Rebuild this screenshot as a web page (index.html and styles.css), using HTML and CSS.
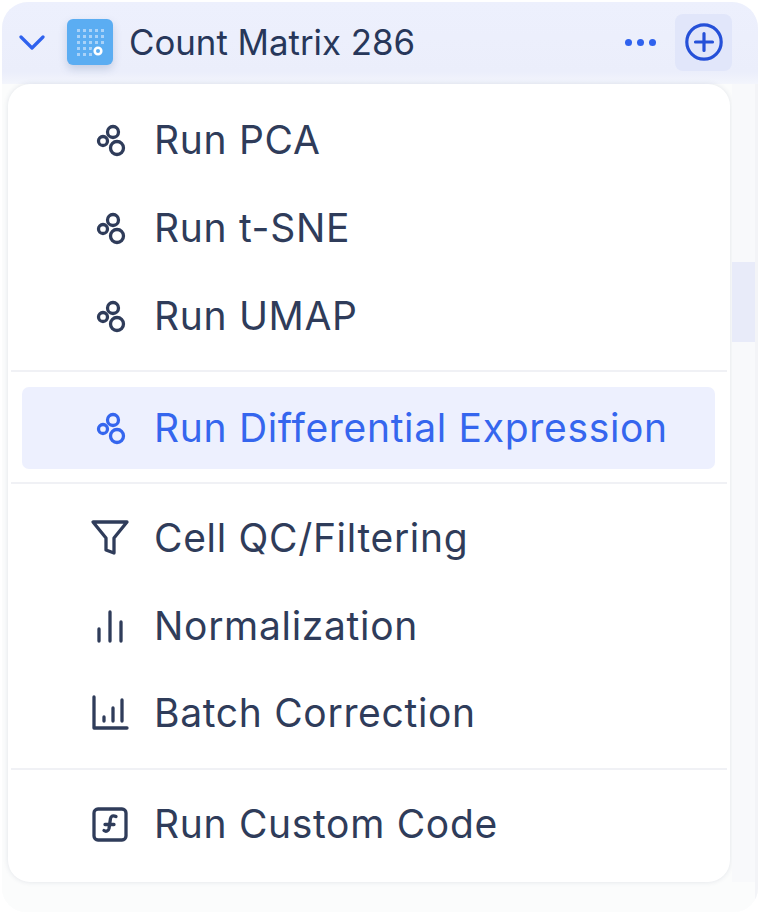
FILE: index.html
```html
<!DOCTYPE html>
<html lang="en">
<head>
<meta charset="utf-8">
<title>Count Matrix 286</title>
<link rel="stylesheet" href="styles.css">
</head>
<body>
<section class="panel">
  <header class="head">
    <svg class="chev" viewBox="0 0 26 16"><path d="M2 3l11 11L24 3"/></svg>
    <span class="logo">
      <svg viewBox="0 0 46 46" width="46" height="46">
        <g fill="#a9d2f8">
          <rect x="10" y="10" width="3" height="3"/><rect x="16" y="10" width="3" height="3"/><rect x="22" y="10" width="3" height="3"/><rect x="28" y="10" width="3" height="3"/><rect x="34" y="10" width="3" height="3"/>
          <rect x="10" y="16" width="3" height="3"/><rect x="16" y="16" width="3" height="3"/><rect x="22" y="16" width="3" height="3"/><rect x="28" y="16" width="3" height="3"/><rect x="34" y="16" width="3" height="3"/>
          <rect x="10" y="22" width="3" height="3"/><rect x="16" y="22" width="3" height="3"/><rect x="22" y="22" width="3" height="3"/><rect x="28" y="22" width="3" height="3"/><rect x="34" y="22" width="3" height="3"/>
          <rect x="10" y="28" width="3" height="3"/><rect x="16" y="28" width="3" height="3"/><rect x="22" y="28" width="3" height="3"/><rect x="28" y="28" width="3" height="3"/>
          <rect x="10" y="34" width="3" height="3"/><rect x="16" y="34" width="3" height="3"/><rect x="22" y="34" width="3" height="3"/>
        </g>
        <circle cx="31" cy="32" r="6.500" fill="#5badf2"/>
        <circle cx="31" cy="32" r="3.300" fill="none" stroke="#fff" stroke-width="2.600"/>
      </svg>
    </span>
    <h1 class="title">Count Matrix 286</h1>
    <span class="dots"><i></i><i></i><i></i></span>
    <button class="add" type="button" aria-label="Add">
      <svg viewBox="0 0 38 38" width="38" height="38"><circle cx="19" cy="19" r="17.2"/><path d="M19 10.500v17M10.500 19h17"/></svg>
    </button>
  </header>
  <div class="body">
    <nav class="menu">
      <ul class="group">
        <li class="item"><svg class="ico" viewBox="0 0 40 40"><use href="#cells"/></svg>Run PCA</li>
        <li class="item"><svg class="ico" viewBox="0 0 40 40"><use href="#cells"/></svg>Run t-SNE</li>
        <li class="item"><svg class="ico" viewBox="0 0 40 40"><use href="#cells"/></svg>Run UMAP</li>
      </ul>
      <ul class="group group-active">
        <li class="item active"><svg class="ico" viewBox="0 0 40 40"><use href="#cells"/></svg>Run Differential Expression</li>
      </ul>
      <ul class="group group-tight">
        <li class="item"><svg class="ico" viewBox="0 0 40 40"><path d="M3 4h34L24 20v15l-8-3V20z"/></svg>Cell QC/Filtering</li>
        <li class="item"><svg class="ico" viewBox="0 0 40 40"><path d="M9 24v12M20 7v29M31 17v19"/></svg>Normalization</li>
        <li class="item"><svg class="ico" viewBox="0 0 40 40"><path d="M4 4v31h33M14 24v4M23 15v13M32 7v21"/></svg>Batch Correction</li>
      </ul>
      <ul class="group">
        <li class="item"><svg class="ico" viewBox="0 0 40 40"><rect x="4" y="5" width="32" height="31" rx="4"/><path d="M26 12.500c-3-1.500-5-.5-5.500 2l-1.500 10c-.5 2.500-3 3.500-5 2M15 20.500h9"/></svg>Run Custom Code</li>
      </ul>
    </nav>
    <div class="track"><span class="thumb"></span></div>
  </div>
</section>
<svg class="defs" width="0" height="0" aria-hidden="true">
  <symbol id="cells" viewBox="0 0 40 40">
    <circle cx="13" cy="22" r="4.500"/><circle cx="23" cy="13" r="5.500"/><circle cx="27" cy="29" r="6.500"/>
  </symbol>
</svg>
</body>
</html>
```
FILE: styles.css
```css
* { box-sizing: border-box; }
html, body { margin: 0; padding: 0; background: #fff; }
body { width: 764px; height: 914px; overflow: hidden; font-family: Inter, "Liberation Sans", sans-serif; color: #2c3a58; }
.defs { display: block; }
.panel { margin: 2px 6px 0 2px; height: 910px; border-radius: 26px 26px 24px 24px; overflow: hidden; background: #fbfcfc; display: flex; flex-direction: column; }
.head { height: 82px; flex: none; background: linear-gradient(180deg, #edf0fd 0%, #ebeefb 85%, #f3f5fc 100%); display: flex; align-items: center; padding: 0 26px 2px 17px; }
.chev { width: 26px; height: 16px; fill: none; stroke: #2f62ee; stroke-width: 3.200; stroke-linecap: round; stroke-linejoin: round; margin-right: 22px; }
.logo { width: 46px; height: 46px; border-radius: 6px; background: #5badf2; box-shadow: 0 4px 8px rgba(60, 90, 140, .22); display: flex; margin-right: 16px; }
.title { margin: 0; font-size: 34.800px; font-weight: 400; color: #27375a; flex: 1; letter-spacing: 0; white-space: nowrap; }
.dots { display: flex; gap: 5px; margin-right: 19px; }
.dots i { width: 7px; height: 7px; border-radius: 50%; background: #2f62ee; }
.add { width: 57px; height: 57px; padding: 0; border: 0; border-radius: 8px; background: #e1e6fa; display: flex; align-items: center; justify-content: center; }
.add svg { fill: none; stroke: #2550d8; stroke-width: 3.200; stroke-linecap: round; }
.body { flex: 1; display: flex; align-items: flex-start; background: #fbfcfc; border-right: 3px solid #f3f4f7; }
.menu { width: 722px; height: 798px; margin-left: 6px; background: #fff; border-radius: 22px; box-shadow: 0 0 5px rgba(50, 60, 100, .13); padding: 12px 3px 0; flex: none; }
.group { list-style: none; margin: 0; padding: 0 0 10px; border-bottom: 2px solid #f0f1f5; }
.group:last-child { border-bottom: 0; padding: 0; }
.group + .group { padding-top: 11px; }
.group-active { padding: 15px 12px 13px 11px !important; }
.group-tight .item { height: 87.5px; }
.item { height: 88px; display: flex; align-items: center; padding-left: 79px; padding-bottom: 2px; font-size: 39px; letter-spacing: .68px; color: #2f3c5a; white-space: nowrap; }
.ico { width: 40px; height: 40px; margin-right: 24px; flex: none; fill: none; stroke: currentColor; stroke-width: 3.300; stroke-linecap: round; stroke-linejoin: round; }
.active { height: 82px; padding-left: 68px; background: #edf0fe; border-radius: 7px; color: #3566ee; }
.track { width: 23px; height: 798px; margin-left: 2px; background: #f8f9fb; padding-top: 178px; flex: none; }
.thumb { display: block; height: 80px; background: #e8ebf9; }
```
